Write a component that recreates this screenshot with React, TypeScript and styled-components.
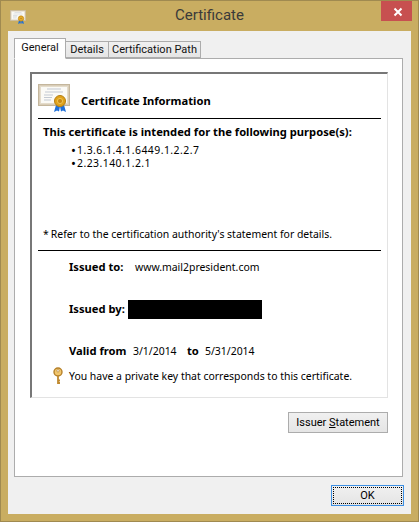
import React from 'react';
import styled, { createGlobalStyle } from 'styled-components';

const GlobalStyle = createGlobalStyle`
  html, body {
    margin: 0;
    padding: 0;
    background: #c9ad61;
  }
  * {
    box-sizing: border-box;
  }
`;

const CertIcon: React.FC<{ size: number }> = ({ size }) => (
  <svg width={size} height={size * 0.875} viewBox="0 0 32 28">
    <rect x="0.5" y="0.5" width="31" height="21" fill="#d9cdb8" stroke="#c4b69c" />
    <rect x="2.5" y="2.5" width="27" height="17" fill="#fbfaf6" stroke="#e4dccb" />
    <path d="M9 5h14M7 8h18M6 11h9M6 13.5h8M6 16h7" stroke="#c3c9d2" strokeWidth="1" />
    <path d="M18 21l-2 7 3-1.5 2 1 1-5zM26 21l2 7-3-1.5-2 1-1-5z" fill="#1f6fd8" />
    <circle cx="22" cy="17" r="5.5" fill="#e0a21b" stroke="#b57f10" />
    <circle cx="22" cy="17" r="2.6" fill="#c98a12" stroke="#f3cf63" strokeWidth="0.8" />
  </svg>
);

const KeyIcon: React.FC = () => (
  <svg width="12" height="18" viewBox="0 0 12 18">
    <circle cx="6" cy="5" r="4" fill="#f1c66d" stroke="#b5802a" strokeWidth="1.4" />
    <circle cx="6" cy="3.8" r="1.2" fill="#fff" stroke="#b5802a" strokeWidth="0.7" />
    <path d="M6 9v8M6 13.5h2M6 16h2" stroke="#c08a30" strokeWidth="1.8" fill="none" />
  </svg>
);

const App: React.FC = () => {
  return (
    <Frame>
      <GlobalStyle />
      <TitleBar>
        <CertIcon size={16} />
        <WindowTitle>Certificate</WindowTitle>
        <CloseButton>
          <svg width="10" height="10" viewBox="0 0 10 10">
            <path d="M1.5 1.5l7 7M8.5 1.5l-7 7" stroke="#fff" strokeWidth="2" />
          </svg>
        </CloseButton>
      </TitleBar>
      <Client>
        <TabStrip>
          <Tab $active $width={52}>General</Tab>
          <Tab $width={44}>Details</Tab>
          <Tab $width={93}>Certification Path</Tab>
        </TabStrip>
        <Panel>
          <InfoBox>
            <InfoHeader>
              <CertIcon size={32} />
              <InfoTitle>Certificate Information</InfoTitle>
            </InfoHeader>
            <Rule />
            <PurposeSection>
              <Strong>This certificate is intended for the following purpose(s):</Strong>
              <PurposeList>
                <li>1.3.6.1.4.1.6449.1.2.2.7</li>
                <li>2.23.140.1.2.1</li>
              </PurposeList>
              <Note>
                *<span>Refer to the certification authority's statement for details.</span>
              </Note>
            </PurposeSection>
            <Rule />
            <DetailsSection>
              <DetailRow>
                <Label $width={66}>Issued to:</Label>
                <Value>www.mail2president.com</Value>
              </DetailRow>
              <DetailRow>
                <Label $width={59}>Issued by:</Label>
                <Redacted />
              </DetailRow>
              <DetailRow>
                <Label $width={64}>Valid from</Label>
                <Value $width={54}>3/1/2014</Value>
                <Label $width={18}>to</Label>
                <Value>5/31/2014</Value>
              </DetailRow>
            </DetailsSection>
            <KeyRow>
              <KeyIcon />
              <Value>You have a private key that corresponds to this certificate.</Value>
            </KeyRow>
          </InfoBox>
          <StatementRow>
            <DialogButton>
              <span>
                Issuer <u>S</u>tatement
              </span>
            </DialogButton>
          </StatementRow>
        </Panel>
        <Footer>
          <OkButton>
            <span>OK</span>
          </OkButton>
        </Footer>
      </Client>
    </Frame>
  );
};

const Frame = styled.div`
  width: 419px;
  height: 522px;
  display: flex;
  flex-direction: column;
  padding: 0 7px 7px;
  background: #c9ad61;
  border: 1px solid #a08a50;
  font-family: 'Noto Sans', 'Liberation Sans', sans-serif;
  font-size: 10.45px;
  line-height: 14px;
  color: #000;
  overflow: hidden;
`;

const TitleBar = styled.header`
  position: relative;
  height: 30px;
  flex: none;
  display: flex;
  align-items: center;
  svg:first-child {
    margin: 1px 0 0 2px;
  }
`;

const WindowTitle = styled.h1`
  position: absolute;
  left: 0;
  right: 0;
  top: 4px;
  margin: 0;
  text-align: center;
  font-family: Roboto, 'Noto Sans', sans-serif;
  font-size: 15px;
  font-weight: 400;
  line-height: 20px;
  color: #3a3a3a;
`;

const CloseButton = styled.div`
  position: absolute;
  top: 0;
  right: -1px;
  width: 31px;
  height: 20px;
  display: flex;
  align-items: center;
  justify-content: center;
  background: #c75050;
`;

const Client = styled.main`
  flex: 1;
  display: flex;
  flex-direction: column;
  padding: 7px 8px 0 6px;
  background: #f0f0f0;
`;

const TabStrip = styled.div`
  display: flex;
  align-items: flex-end;
  height: 20px;
  flex: none;
  position: relative;
  z-index: 1;
`;

const Tab = styled.div<{ $active?: boolean; $width: number }>`
  width: ${p => p.$width}px;
  height: ${p => (p.$active ? '21px' : '17px')};
  margin-bottom: ${p => (p.$active ? '-1px' : '0')};
  padding-top: ${p => (p.$active ? '2px' : '1px')};
  margin-left: ${p => (p.$active ? '0' : '-1px')};
  background: ${p => (p.$active ? '#fff' : 'linear-gradient(#f0f0f0, #e5e5e5)')};
  border: 1px solid #acacac;
  border-bottom-color: ${p => (p.$active ? '#fff' : '#acacac')};
  font-family: Roboto, 'Noto Sans', sans-serif;
  font-size: 11px;
  line-height: 14px;
  text-align: center;
  color: #111;
  white-space: nowrap;
`;

const Panel = styled.section`
  height: 419px;
  flex: none;
  display: flex;
  flex-direction: column;
  padding: 13px 14px 0 15px;
  background: #fff;
  border: 1px solid #acacac;
`;

const InfoBox = styled.div`
  height: 326px;
  flex: none;
  display: flex;
  flex-direction: column;
  border-style: solid;
  border-color: #777 #e3e3e3 #e3e3e3 #777;
  border-width: 2px 1px 1px 2px;
`;

const InfoHeader = styled.div`
  height: 44px;
  flex: none;
  display: flex;
  align-items: center;
  gap: 11px;
  padding: 10px 6px 6px;
`;

const InfoTitle = styled.h2`
  margin: 6px 0 0;
  font-size: 11.2px;
  font-weight: 700;
  line-height: 14px;
`;

const Rule = styled.hr`
  height: 1px;
  flex: none;
  margin: 0 6px;
  border: 0;
  background: #000;
`;

const PurposeSection = styled.div`
  height: 131px;
  flex: none;
  display: flex;
  flex-direction: column;
  padding: 6px 0 9px 11px;
`;

const Strong = styled.div`
  font-size: 11.2px;
  font-weight: 700;
  white-space: nowrap;
`;

const PurposeList = styled.ul`
  margin: 5px 0 0;
  padding: 0 0 0 28px;
  list-style: none;
  line-height: 13px;
  letter-spacing: 0.45px;

  li::before {
    content: '•';
    display: inline-block;
    width: 6px;
    font-size: 13px;
    line-height: 13px;
    vertical-align: top;
  }
`;

const Note = styled.div`
  margin-top: auto;
  white-space: nowrap;

  span {
    margin-left: 2px;
  }
`;

const DetailsSection = styled.div`
  display: flex;
  flex-direction: column;
  gap: 28px;
  padding: 9px 0 0 37px;
`;

const DetailRow = styled.div`
  height: 14px;
  display: flex;
  align-items: center;
  white-space: nowrap;
`;

const Label = styled.span<{ $width: number }>`
  flex: none;
  width: ${p => p.$width}px;
  font-size: 11.2px;
  font-weight: 700;
`;

const Value = styled.span<{ $width?: number }>`
  flex: none;
  width: ${p => (p.$width ? `${p.$width}px` : 'auto')};
`;

const Redacted = styled.div`
  width: 134px;
  height: 19px;
  flex: none;
  background: #000;
`;

const KeyRow = styled.div`
  height: 14px;
  margin-top: 11px;
  padding-left: 20px;
  display: flex;
  align-items: center;
  gap: 5px;
  white-space: nowrap;
`;

const StatementRow = styled.div`
  display: flex;
  justify-content: flex-end;
  margin-top: 14px;
`;

const DialogButton = styled.div`
  width: 100px;
  height: 21px;
  display: flex;
  align-items: center;
  justify-content: center;
  background: linear-gradient(#f0f0f0, #e5e5e5);
  border: 1px solid #acacac;
  font-family: Roboto, 'Noto Sans', sans-serif;
  font-size: 11px;
`;

const Footer = styled.footer`
  display: flex;
  justify-content: flex-end;
  margin-right: -1px;
  padding-top: 8px;
`;

const OkButton = styled.div`
  width: 73px;
  height: 21px;
  padding: 1px;
  background: linear-gradient(#f0f0f0, #e5e5e5);
  border: 1px solid #3c8fe3;

  span {
    height: 100%;
    display: flex;
    align-items: center;
    justify-content: center;
    border: 1px dotted #000;
    font-family: Roboto, 'Noto Sans', sans-serif;
    font-size: 11px;
  }
`;

export default App;
